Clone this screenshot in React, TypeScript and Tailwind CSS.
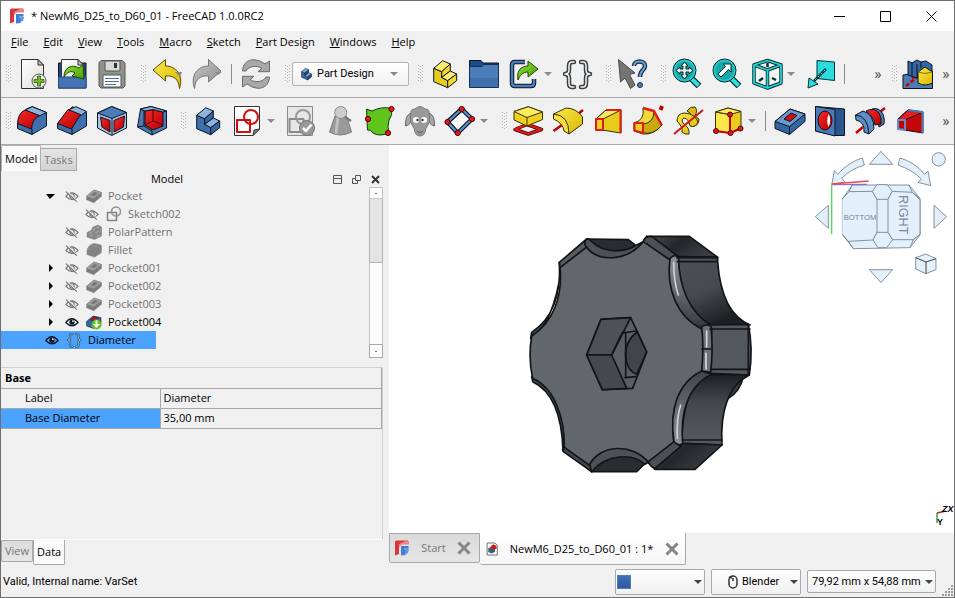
import type { ReactNode } from 'react';


const OUT = '#0b1521';

type IconProps = {
  className?: string,
  children: ReactNode
}

function Icon({ className = 'w-8 h-8', children }: IconProps) {
  return <svg viewBox="0 0 32 32" className={`shrink-0 ${className}`} fill="none" strokeLinejoin="round" aria-hidden="true">
    {children}
  </svg>
}

function Gradients() {

  const stops = [
    ['yellow', '#fce94f', '#d8b800'],
    ['red', '#f52a2a', '#b80000'],
    ['green', '#8ae234', '#4e9a06'],
    ['gray', '#c8c8c8', '#888a85'],
    ['paper', '#ffffff', '#dcdcd8'],
  ];

  return <svg className="absolute w-0 h-0" aria-hidden="true">
    <defs>
      {stops.map(([id, from, to]) =>
        <linearGradient key={id} id={id} x1="0" y1="0" x2="1" y2="1">
          <stop offset="0" stopColor={from} />
          <stop offset="1" stopColor={to} />
        </linearGradient>
      )}
      <linearGradient id="knobTop" x1="0" y1="0" x2="1" y2="0.4">
        <stop offset="0" stopColor="#4a4f53" />
        <stop offset="0.5" stopColor="#24272a" />
        <stop offset="1" stopColor="#3a3e42" />
      </linearGradient>
      <linearGradient id="knobScoop" x1="0" y1="0" x2="0.5" y2="1">
        <stop offset="0" stopColor="#4d5256" />
        <stop offset="0.55" stopColor="#454a4f" />
        <stop offset="1" stopColor="#1d2023" />
      </linearGradient>
      <linearGradient id="knobLow" x1="0" y1="0" x2="0" y2="1">
        <stop offset="0" stopColor="#1d2023" />
        <stop offset="0.4" stopColor="#43484c" />
        <stop offset="1" stopColor="#565b60" />
      </linearGradient>
      <linearGradient id="knobEdge" x1="0" y1="0" x2="0" y2="1">
        <stop offset="0" stopColor="#8d9296" />
        <stop offset="0.4" stopColor="#6d7276" />
        <stop offset="1" stopColor="#33373a" />
      </linearGradient>
      <linearGradient id="knobEdgeLow" x1="0" y1="1" x2="0" y2="0">
        <stop offset="0" stopColor="#8d9296" />
        <stop offset="0.4" stopColor="#6d7276" />
        <stop offset="1" stopColor="#3f4448" />
      </linearGradient>
    </defs>
  </svg>
}


/* file and edit icons */

function NewIcon() {
  return <Icon>
    <path d="M5.5 1.5H22L27.5 7V30.5H5.5Z" fill="url(#paper)" stroke="#2e3436" />
    <path d="M22 1.5V7H27.5Z" fill="#babdb6" stroke="#2e3436" />
    <circle cx="23" cy="23" r="7" fill="#eeeeec" stroke="#555753" />
    <path d="M21.5 18H24.5V21.5H28V24.5H24.5V28H21.5V24.5H18V21.5H21.5Z" fill="#73b52e" stroke="#2f5e05" strokeWidth="0.8" />
  </Icon>
}

function OpenIcon() {
  return <Icon>
    <path d="M2.5 5H30V30H2.5Z" fill="#204a87" stroke={OUT} />
    <path d="M5.5 1.5H22L27.5 7V22H5.5Z" fill="url(#paper)" stroke="#2e3436" />
    <path d="M22 1.5V7H27.5Z" fill="#babdb6" stroke="#2e3436" />
    <path d="M2.5 19H30V30H2.5Z" fill="#4474b2" stroke="#204a87" />
    <path d="M8 19C8 9 16 6 23 10L27 7L28 21L16 18L19 15C15 12 11 14 8 19Z" fill="url(#green)" stroke="#1f4a02" />
  </Icon>
}

function SaveIcon() {
  return <Icon>
    <path d="M5 2.5H26L29 5V28L27 30H5L3 28V4.5Z" fill="#8f918d" stroke="#555753" />
    <rect x="9" y="3" width="15" height="10" rx="1" fill="#d8d8d6" stroke="#555753" />
    <rect x="18" y="5" width="3" height="5" fill="#2e3436" />
    <rect x="7" y="17" width="18" height="12" rx="1" fill="#fff" stroke="#555753" />
    <path d="M9 20.5H23M9 23.5H23M9 26.5H20" stroke="#4a6fa5" strokeWidth="1.2" />
  </Icon>
}

function UndoIcon() {
  return <Icon>
    <path d="M2 12L14.5 1.5V8C24 8 33 16 28.5 30.5C28 21 22 17 14.5 18V23Z" fill="url(#yellow)" stroke="#5c4b00" />
    <path d="M24 14H31L29 19Z" fill="#888a85" />
  </Icon>
}

function RedoIcon() {
  return <Icon>
    <path d="M30 13L17.5 1.5V8C7 8 -1 17 3.5 30.5C4 21 10 17 17.5 18V24Z" fill="url(#gray)" stroke="#777" />
    <path d="M24 14H31L27 17Z" fill="#888a85" />
  </Icon>
}

function RefreshIcon() {
  const d = 'M2.5 13C3 5 8 1.7 14 1.7Q20 2 25 6L29.5 3V13.7H18L21.7 10.3C16 7 9 8 6 13Z';
  return <Icon>
    <path d={d} fill="#a8a8a8" stroke="#6c6c6c" />
    <path d={d} fill="#a8a8a8" stroke="#6c6c6c" transform="rotate(180 16 16)" />
  </Icon>
}

/* The L shaped solid is used by Part, Body and the workbench list */
function StepIcon({ face, side, top, className }: { face: string, side: string, top: string, className?: string }) {
  return <Icon className={className}>
    <g stroke={OUT}>
      <path d="M5.7 10.3L13.7 13.7V19.3L19.7 22.7V29.7L5.7 23.7Z" fill={face} />
      <path d="M5.7 10.3L14.7 2.7L22.3 6L13.7 13.7Z" fill={top} />
      <path d="M13.7 13.7L22.3 6V13L13.7 19.3Z" fill={side} />
      <path d="M13.7 19.3L22.3 13L28.7 16L19.7 22.7Z" fill={top} />
      <path d="M19.7 22.7L28.7 16V22.7L19.7 29.7Z" fill={side} />
    </g>
  </Icon>
}

function FolderIcon() {
  return <Icon>
    <path d="M1.5 2.5H13L15 5H30.5V12H1.5Z" fill="#204a87" stroke={OUT} />
    <path d="M1.5 8.5H14L16 6.5H30.5V29.5H1.5Z" fill="#4c7cb8" stroke="#15304f" />
    <path d="M2 20H30V29H2Z" fill="#3f6fae" />
  </Icon>
}

function LinkIcon() {
  return <Icon>
    <path d="M17 4H7Q4 4 4 7V25Q4 28 7 28H23Q26 28 26 25V21" stroke={OUT} strokeWidth="4.5" />
    <path d="M17 4H7Q4 4 4 7V25Q4 28 7 28H23Q26 28 26 25V21" stroke="#4c7cb8" strokeWidth="2.5" />
    <path d="M10 22C8 12 14 8 20 8V3L30 11L20 19V14C15 14 12 17 10 22Z" fill="url(#green)" stroke="#1f4a02" />
  </Icon>
}

function BracesIcon({ className, color = '#3a4043', light = '#f5f5f5' }: { className?: string, color?: string, light?: string }) {
  const d = 'M13 4H11Q8 4 8 8V12Q8 16 4 16Q8 16 8 20V25Q8 29 11 29H13M20 4H22Q25 4 25 8V12Q25 16 29 16Q25 16 25 20V25Q25 29 22 29H20';
  return <Icon className={className}>
    <path d={d} stroke={color} strokeWidth="4.5" strokeLinecap="round" />
    <path d={d} stroke={light} strokeWidth="1.5" strokeLinecap="round" />
  </Icon>
}

function WhatsThisIcon() {
  const d = 'M18 8C18 2 29 2 29 8C29 12 24 12 24 19';
  return <Icon>
    <path d="M2.5 1.5L19 15L13.5 16.5L19 27L14.5 30.5L9 20L4.5 24Z" fill="#747474" stroke="#4a4a4a" />
    <path d={d} stroke="#15304f" strokeWidth="4.5" />
    <path d={d} stroke="#729fcf" strokeWidth="2" />
    <circle cx="24" cy="27" r="2.5" fill="#4c7cb8" stroke="#15304f" />
  </Icon>
}

/* view icons */

function LensIcon({ children }: { children: ReactNode }) {
  return <Icon>
    <path d="M20 20L28 28" stroke="#032a2b" strokeWidth="6.5" />
    <path d="M20.5 20.5L27.5 27.5" stroke="#34e0e2" strokeWidth="4" />
    <circle cx="13.5" cy="12.5" r="11.5" fill="#16a9ab" stroke="#042a2a" />
    <circle cx="13.5" cy="12.5" r="10" stroke="#2cc8ca" strokeWidth="1.5" />
    {children}
  </Icon>
}

function FitAllIcon() {
  return <LensIcon>
    <path d="M13.5 4L17 8H15V11H18V9L22 12.5L18 16V14H15V17H17L13.5 21L10 17H12V14H9V16L5 12.5L9 9V11H12V8H10Z" fill="#eee" stroke="#042a2a" />
  </LensIcon>
}

function FitSelectionIcon() {
  return <LensIcon>
    <path d="M20 6V14L17.5 11.5L10 19L7 16L14.5 8.5L12 6Z" fill="#fff" stroke="#042a2a" />
  </LensIcon>
}

function IsoIcon() {
  const d = 'M3 7L16.5 2.5L30 7V25L16.5 30L3 25ZM3 7L16.5 12L30 7M16.5 12V30';
  return <Icon>
    <path d={d} fill="#f4f4f4" stroke="#033" strokeWidth="3.5" />
    <path d={d} stroke="#2bd0d2" strokeWidth="1.8" />
    <path d="M16.5 5V9M8 23L12 20M21 20L25 22" stroke="#033" strokeWidth="2.5" />
  </Icon>
}

function AlignViewIcon() {
  return <Icon>
    <path d="M13 2.5L30.5 4V22.5L13 20.5Z" fill="#2bdcde" stroke="#033" />
    <path d="M22 11L10 23" stroke="#033" strokeWidth="2.5" />
    <path d="M21 12L10 23" stroke="#9ff" strokeWidth="0.8" strokeDasharray="2 2" />
    <path d="M4 30L5 20L14 26Z" fill="#2bdcde" stroke="#033" />
  </Icon>
}

function StructureIcon() {
  return <Icon>
    <path d="M1 17L30.5 13V30.5H1Z" fill="#4c7cb8" stroke={OUT} />
    <path d="M4 28L14 20M10 20L27 13" stroke="#cc0000" strokeWidth="2.5" strokeDasharray="4 2" />
    <path d="M6 3L10 5L15 2L19 4L24 3L30 7V14L15 20L6 17Z" fill="#3465a4" stroke={OUT} />
    <path d="M10 5V18M15 6V20M19 4V10" stroke={OUT} />
    <path d="M16 14L23 9L30.5 14V25Q23 29 16 25Z" fill="url(#yellow)" stroke={OUT} />
    <path d="M16 14Q23 17 30 14" stroke="#8a7500" />
  </Icon>
}

/* dress-up icons */

function FilletIcon() {
  return <Icon>
    <path d="M1.5 19Q5 4 16.3 1.7L30.5 7.5V21L16 29.5L1.5 23.5Z" fill="#3f70ad" stroke={OUT} />
    <path d="M16.3 1.7L30.5 7.5L23 11L9 5Z" fill="#8fb4dc" stroke={OUT} />
    <path d="M1.5 18.5Q2 8 9 5L23.5 10.5Q16 14 15.5 24Z" fill="url(#red)" stroke={OUT} />
    <path d="M16 29.5V24" stroke={OUT} />
  </Icon>
}

function ChamferIcon() {
  return <Icon>
    <path d="M1.5 19L16.3 1.7L30.5 7.5V21L16 29.5L1.5 23.5Z" fill="#3f70ad" stroke={OUT} />
    <path d="M12 5L20 1.7L30.5 6.5L24 11Z" fill="#8fb4dc" stroke={OUT} />
    <path d="M1.5 18.5L12 4.5L24.5 9.5L15.5 24Z" fill="url(#red)" stroke={OUT} />
    <path d="M16 29.5V24" stroke={OUT} />
  </Icon>
}

function DraftIcon() {
  return <Icon>
    <path d="M1.5 8L15.7 1.5L30.5 7.5V23L15.7 30.5L1.5 23Z" fill="#a9c4e2" stroke={OUT} />
    <path d="M1.5 8L15.7 1.5L30.5 7.5L16 13.5Z" fill="#4c7cb8" stroke={OUT} />
    <path d="M4.5 12L14 15.5V27L6 22Z" fill="url(#red)" stroke={OUT} />
    <path d="M18 15.5L28.5 11L27.5 22L18 27Z" fill="url(#red)" stroke={OUT} />
    <path d="M16 13.5V30" stroke={OUT} />
  </Icon>
}

function ThicknessIcon() {
  return <Icon>
    <path d="M4.5 4L15 1.5L30.5 6V23L16 30L1.5 22Z" fill="#4c7cb8" stroke={OUT} />
    <path d="M4.5 4L8 5.5V21L1.5 22M8 21L16 26V30" stroke={OUT} />
    <path d="M9 6L17 4.5L27 7V21L17 25L9 20Z" fill="url(#red)" stroke={OUT} />
    <path d="M9 20L17 16L27 20M17 16V4.5" stroke="#5c0000" />
    <path d="M4.5 4L15 1.5L30.5 6L27 7L17 4.5L9 6Z" fill="#8fb4dc" stroke={OUT} />
  </Icon>
}

function SketchIcon() {
  return <Icon>
    <path d="M3.5 1.5H28.5V24L22 30.5H3.5Z" fill="#fff" stroke="#333" />
    <path d="M28.5 24L22 30.5L23 25Z" fill="#888a85" stroke="#333" />
    <rect x="6" y="15" width="13" height="12" stroke="#d01010" strokeWidth="2" />
    <circle cx="20" cy="12" r="7" stroke="#d01010" strokeWidth="2" />
  </Icon>
}

function ValidateIcon() {
  return <Icon>
    <path d="M3.5 1.5H28.5V30.5H3.5Z" fill="#e6e6e6" stroke="#8a8a8a" />
    <rect x="5.5" y="14" width="14" height="13" stroke="#8a8a8a" strokeWidth="2" />
    <circle cx="19" cy="12" r="7" stroke="#999" strokeWidth="2" />
    <circle cx="23" cy="23" r="7.5" fill="#999" stroke="#777" />
    <path d="M19 23L22 26L27.5 19.5" stroke="#fff" strokeWidth="2.5" />
  </Icon>
}

function CheckGeometryIcon() {
  return <Icon>
    <path d="M11 11H22.5L27.5 27Q16 33 5.5 27Z" fill="#9a9a9a" stroke="#7a7a7a" />
    <path d="M14 12L12 29" stroke="#c0c0c0" strokeWidth="3" />
    <path d="M21 12L27 16" stroke="#777" strokeWidth="2.5" />
    <circle cx="16.7" cy="7.5" r="6" fill="#ccc" stroke="#888" />
  </Icon>
}

function BinderIcon() {
  return <Icon>
    <path d="M2.5 4L8 6Q18 1 27.5 3.5Q29 10 25 15Q23 22 25 28Q15 32 9 28Q6 24 3.5 25Z" fill="#5fc41b" stroke="#173a02" />
    <g fill="#e01b1b" stroke="#500">
      <circle cx="27.5" cy="4" r="2.6" />
      <circle cx="4" cy="14" r="2.6" />
      <circle cx="24" cy="28" r="2.6" />
    </g>
  </Icon>
}

function CloneIcon() {
  return <Icon>
    <path d="M7 8Q1 10 1.5 21Q5 21 8 15M25 8Q31 10 30.5 21Q27 21 24 15" fill="#a5a5a5" stroke="#666" />
    <path d="M7 9Q6 4 11 4Q16 -1 21 4Q26 4 25 9Q27 17 22 23Q21 31 16 31Q11 31 10 23Q5 17 7 9Z" fill="#9a9a9a" stroke="#777" />
    <circle cx="12" cy="15" r="3" fill="#fff" />
    <circle cx="20" cy="15" r="3" fill="#fff" />
    <circle cx="13.5" cy="15" r="1.2" fill="#333" />
    <circle cx="18.5" cy="15" r="1.2" fill="#333" />
    <path d="M13 26L16 28L19 26" stroke="#555" />
  </Icon>
}

function DatumIcon() {
  const d = 'M17.7 4L28 14L13.7 28L3.5 17Z';
  return <Icon>
    <path d={d} fill="#fafafa" stroke={OUT} strokeWidth="4.5" />
    <path d={d} stroke="#5c8ec9" strokeWidth="2.2" />
    <g fill="#e01b1b" stroke="#500">
      <circle cx="17.7" cy="4" r="2.6" />
      <circle cx="28" cy="14" r="2.6" />
      <circle cx="13.7" cy="28" r="2.6" />
      <circle cx="3.5" cy="17" r="2.6" />
    </g>
  </Icon>
}

/* additive and subtractive icons */

function PadIcon() {
  return <Icon>
    <path d="M3 24.5L15 19.5L29.5 24.5L16.3 29Z" stroke="#400" strokeWidth="3.5" />
    <path d="M3 24.5L15 19.5L29.5 24.5L16.3 29Z" stroke="#e01b1b" strokeWidth="2" />
    <path d="M2 6.5L16.3 1.7L30.5 7V14.5L15 21L2 15Z" fill="#f0d020" stroke="#3b3000" />
    <path d="M2 6.5L16.3 1.7L30.5 7L15 12.5Z" fill="#fcec60" stroke="#3b3000" />
    <path d="M15 12.5V21" stroke="#3b3000" />
  </Icon>
}

function RevolutionIcon() {
  return <Icon>
    <path d="M1.5 26L10 20M26 9L31 5" stroke="#b00" strokeWidth="2.5" />
    <path d="M1.5 9L14 3Q24 3 30.5 12V19L17 29Q16 15 1.5 9Z" fill="url(#yellow)" stroke="#3b3000" />
    <path d="M1.5 9Q17 10 17 29L12 26Q11 18 1.5 14Z" fill="#f7de3c" stroke="#3b3000" />
  </Icon>
}

function LoftIcon() {
  return <Icon>
    <path d="M4 14L14 5H29V28L10 25Z" fill="#e8cc1c" stroke="#3b3000" />
    <path d="M4 14L14 5H29L11 14Z" fill="#fcec60" stroke="#3b3000" />
    <path d="M14 5H28.5V28" stroke="#e01b1b" strokeWidth="2" />
    <path d="M4 14H11V25H4Z" fill="#f0d020" stroke="#e01b1b" strokeWidth="2" />
  </Icon>
}

function SweepIcon() {
  return <Icon>
    <path d="M11 3L22 6L30 20Q22 30 11 29L2 26V18Q13 15 11 3Z" fill="#f0d83a" stroke="#3b3000" />
    <path d="M11 19Q22 18 22 6L30 20Q22 30 11 28Z" fill="#c9aa0c" stroke="#3b3000" />
    <path d="M11 3L22 6L29.5 20" stroke="#e01b1b" strokeWidth="2.5" />
    <path d="M2.5 18H11V28L2.5 25.5Z" fill="#f0d020" stroke="#e01b1b" strokeWidth="2" />
    <path d="M28.5 5L30 1" stroke="#b00" strokeWidth="4" />
  </Icon>
}

function HelixIcon() {
  return <Icon>
    <path d="M15 6Q18 1 23 2Q26 5 23 11L27 14Q27 20 22 21L17 19L18 8Z" fill="#d8ba14" stroke="#3b3000" />
    <path d="M5 16Q5 8 13 8Q23 9 26 17Q24 23 18 21Q17 14 12 13Q9 14 11 18Q18 23 17 29Q13 30 10 27Q11 22 5 16Z" fill="url(#yellow)" stroke="#3b3000" />
    <path d="M2 29L31 5" stroke="#c81818" strokeWidth="2" />
  </Icon>
}

function PrimitiveIcon() {
  return <Icon>
    <path d="M3.5 7L16 3L29 6.5V24L18 28L3.5 26Z" fill="#e8cc1c" stroke="#3b3000" />
    <path d="M3.5 7L18 9.5V28L3.5 26Z" fill="#fae74a" stroke="#3b3000" />
    <path d="M3.5 7L16 3L29 6.5L18 9.5Z" fill="#fcec60" stroke="#3b3000" />
    <path d="M18 9.5V28M18 28L28.5 23.5M18 28L4 26" stroke="#c00" strokeWidth="2" />
    <g fill="#e01b1b" stroke="#500">
      <circle cx="18" cy="9.5" r="2.5" />
      <circle cx="18.5" cy="28" r="2.5" />
      <circle cx="4" cy="26" r="2.5" />
      <circle cx="28.5" cy="23.5" r="2.5" />
    </g>
  </Icon>
}

function PocketIcon({ className, body = '#3465a4', top = '#6c99cd', hole = '#d01010', line = OUT }: { className?: string, body?: string, top?: string, hole?: string, line?: string }) {
  return <Icon className={className}>
    <path d="M1 16.5L16 4L31 9V16.5L15.5 29.5L1 23.5Z" fill={body} stroke={line} />
    <path d="M1 16.5L16 4L31 9L15.5 21.5Z" fill={top} stroke={line} />
    <path d="M10 14L17 8L23 10.5L16 16.5Z" fill={hole} stroke={line} />
    <path d="M15.5 21.5V29.5" stroke={line} />
  </Icon>
}

function HoleIcon() {
  return <Icon>
    <path d="M1.5 1.5L30.5 4V30.5H21L1.5 26Z" fill="#2a5590" stroke={OUT} />
    <path d="M1.5 1.5L21 4.5V31L1.5 26Z" fill="#4c7cb8" stroke={OUT} />
    <ellipse cx="11" cy="15.5" rx="7" ry="9.5" fill="url(#red)" stroke={OUT} />
    <path d="M14.5 9Q18 15 14.5 22Q12 16 14.5 9Z" fill="#fff" />
  </Icon>
}

function GrooveIcon() {
  return <Icon>
    <path d="M2 28L9 22M26 7L31 3" stroke="#c00" strokeWidth="2.5" />
    <path d="M18 4Q25 2 29 9Q31 14 30 19L25 22Q24 12 15 7Z" fill="#4c7cb8" stroke={OUT} />
    <path d="M12 6Q20 2 25 8Q28 13 27 19L21 20Q20 12 12 6Z" fill="url(#red)" stroke={OUT} />
    <path d="M1.5 10L9 6Q20 9 20 24L15 29L10 27Q11 17 2 15Z" fill="#5c8ec9" stroke={OUT} />
    <path d="M1.5 10Q14 11 15 29" stroke={OUT} />
  </Icon>
}

function SubLoftIcon() {
  return <Icon>
    <path d="M4 14L14 5L29 7V28L10 25Z" fill="#c40808" stroke={OUT} />
    <path d="M4 14L14 5L29 7L11 15Z" fill="#e02020" stroke={OUT} />
    <path d="M14 5L28.5 7V28" stroke="#4c7cb8" strokeWidth="2" />
    <path d="M4 15H11V25L4 24Z" fill="#cc0000" stroke="#5c8ec9" strokeWidth="2" />
  </Icon>
}

/* small icons */

function Logo({ className }: { className?: string }) {
  return <Icon className={className}>
    <path d="M2 4Q2 1 5 1H28V8H10V28L2 31Z" fill="#d9363c" />
    <path d="M10 8L24 1H28L30 3V9H16L10 14Z" fill="#f08286" />
    <path d="M14 12H29V17H21V19H28V24H24L23 30L14 31Z" fill="#3f7fd6" />
    <path d="M24 16L30 18L28 26L22 28Z" fill="#5b97e6" />
  </Icon>
}

function GraySketchIcon() {
  return <Icon className="w-4 h-4">
    <rect x="3" y="13" width="18" height="16" stroke="#808080" strokeWidth="3" />
    <circle cx="20" cy="11" r="9" stroke="#909090" strokeWidth="3" />
  </Icon>
}

function GrayPatternIcon() {
  return <Icon className="w-4 h-4">
    <path d="M2 17L10 13L14 6L24 2L31 6V24L17 31L2 26Z" fill="#8a8a8a" stroke="#777" />
    <path d="M7 19L12 16M14 12L18 9M21 8L26 5M8 25L13 22M19 18L26 14M21 26L27 22" stroke="#b4b4b4" strokeWidth="2" />
  </Icon>
}

function GrayFilletIcon() {
  return <Icon className="w-4 h-4">
    <path d="M2 19Q3 6 16 3L30 6Q32 14 30 22L17 30L2 25Z" fill="#838383" stroke="#777" />
    <path d="M3 18Q4 8 10 6L23 10" stroke="#989898" strokeWidth="2" />
  </Icon>
}

function TipIcon() {
  return <Icon className="w-4 h-4">
    <path d="M1 15L14 4L30 7V20L15 29L1 24Z" fill="#3465a4" stroke={OUT} />
    <path d="M9 12L16 6L25 8L18 14Z" fill="#d01010" stroke={OUT} />
    <circle cx="21" cy="21" r="10" fill="#63c01c" />
    <path d="M19 13H23V20H28L21 28L14 20H19Z" fill="#fff" />
  </Icon>
}

function EyeIcon() {
  return <Icon className="w-3.5 h-3.5">
    <path d="M2 17Q15 0 30 17Q16 32 2 17Z" stroke="#101820" strokeWidth="3" />
    <circle cx="16" cy="16" r="6" fill="#101820" />
    <circle cx="18" cy="14" r="2" fill="#fff" />
  </Icon>
}

function EyeOffIcon() {
  return <Icon className="w-3.5 h-3.5">
    <path d="M2 17Q15 0 30 17Q16 32 2 17Z" stroke="#707070" strokeWidth="2.5" />
    <circle cx="16" cy="16" r="5" stroke="#707070" strokeWidth="2.5" />
    <path d="M4 5L28 28" stroke="#efefef" strokeWidth="3" />
    <path d="M2 6L27 29" stroke="#707070" strokeWidth="2.5" />
  </Icon>
}

function Caret({ className = 'text-[#8a8a8a]' }: { className?: string }) {
  return <svg viewBox="0 0 8 4" className={`w-2 h-1 shrink-0 pointer-events-none ${className}`} fill="currentColor" aria-hidden="true">
    <path d="M0 0H8L4 4Z" />
  </svg>
}


/* toolbar parts */

function Handle({ className = 'w-[15px]' }: { className?: string }) {
  return <div className={`flex justify-end shrink-0 ${className}`}>
    <svg viewBox="0 0 6 18" className="w-1.5 h-[18px]" fill="#b8b8b8" aria-hidden="true">
      {[0, 3, 6, 9, 12, 15].map((y) => <path key={y} d={`M0 ${y}h1v1h-1zM2 ${y + 1}h1v1h-1zM4 ${y}h1v1h-1z`} />)}
    </svg>
  </div>
}

function Tool({ name, children }: { name: string, children: ReactNode }) {
  return <button type="button" aria-label={name} className="flex w-10 h-10 items-center justify-center shrink-0">
    {children}
  </button>
}

function MenuArrow({ name }: { name: string }) {
  return <button type="button" aria-label={name} className="flex w-[13px] h-8 items-center justify-start shrink-0">
    <Caret />
  </button>
}

function Separator() {
  return <div className="flex w-[9px] justify-center shrink-0">
    <div className="w-px h-5 bg-[#8c8c8c]"></div>
  </div>
}

function More() {
  return <button type="button" aria-label="More tools" className="w-4 shrink-0 text-sm text-[#444]">»</button>
}


type Row = {
  label: string,
  icon: ReactNode,
  visible?: boolean,
  child?: boolean,
  arrow?: 'open' | 'closed'
}

const grayPocket = <PocketIcon className="w-4 h-4" body="#7b7b7b" top="#9f9f9f" hole="#757575" line="#858585" />;

const rows: Row[] = [
  { label: 'Pocket', icon: grayPocket, arrow: 'open' },
  { label: 'Sketch002', icon: <GraySketchIcon />, child: true },
  { label: 'PolarPattern', icon: <GrayPatternIcon /> },
  { label: 'Fillet', icon: <GrayFilletIcon /> },
  { label: 'Pocket001', icon: grayPocket, arrow: 'closed' },
  { label: 'Pocket002', icon: grayPocket, arrow: 'closed' },
  { label: 'Pocket003', icon: grayPocket, arrow: 'closed' },
  { label: 'Pocket004', icon: <TipIcon />, arrow: 'closed', visible: true },
];

const menus = ['File', 'Edit', 'View', 'Tools', 'Macro', 'Sketch', 'Part Design', 'Windows', 'Help'];


function TreeRow({ row }: { row: Row }) {
  return <li className={`flex items-center h-[18px] ${row.child ? 'pl-16' : 'pl-11'}`}>
    <span className="flex w-5 shrink-0">
      {row.arrow &&
        <button type="button" aria-label={`Expand ${row.label}`}>
          <svg viewBox="0 0 10 10" className="w-2.5 h-2.5" aria-hidden="true">
            {row.arrow === 'open' ? <path d="M1 3H10L5 8Z" /> : <path d="M4 1V9L8 5Z" />}
          </svg>
        </button>
      }
    </span>
    <button type="button" aria-label={`Toggle ${row.label}`} className="mr-[7px]">
      {row.visible ? <EyeIcon /> : <EyeOffIcon />}
    </button>
    <span className="flex mr-1.5">{row.icon}</span>
    <span className={row.visible ? 'text-black' : 'text-[#707070]'}>{row.label}</span>
  </li>
}


function ModelPanel() {
  return <aside className="flex flex-col w-[382px] mr-1.5 shrink-0">

    <div role="tablist" className="flex items-end h-[26px] shrink-0">
      <button role="tab" aria-selected="true" className="h-[26px] px-[3px] bg-[#fafafa] border border-b-0 border-[#b0b0b0] rounded-t-xs">Model</button>
      <button role="tab" aria-selected="false" className="h-[23px] px-[3px] bg-linear-to-b from-[#e4e4e4] to-[#d2d2d2] border border-l-0 border-[#a8a8a8] text-[#777]">Tasks</button>
    </div>

    <header className="flex items-center h-4 shrink-0">
      <h2 className="flex-1 text-center">Model</h2>
      <div className="flex items-center gap-2.5 pr-[3px]">
        <button type="button" aria-label="Collapse">
          <svg viewBox="0 0 9 9" className="w-[9px] h-[9px]" fill="none" stroke="#555"><path d="M0.5 0.5H8.5V8.5H0.5ZM0.5 3.5H8.5" /></svg>
        </button>
        <button type="button" aria-label="Float">
          <svg viewBox="0 0 9 9" className="w-[9px] h-[9px]" fill="none" stroke="#555"><path d="M3.5 0.5H8.5V5.5H3.5ZM3.5 3.5H0.5V8.5H5.5V5.5" /></svg>
        </button>
        <button type="button" aria-label="Close panel">
          <svg viewBox="0 0 9 9" className="w-[9px] h-[9px]" stroke="#333" strokeWidth="2"><path d="M1 1L8 8M8 1L1 8" /></svg>
        </button>
      </div>
    </header>

    <div className="flex h-[171px] shrink-0">
      <ul className="flex-1">
        {rows.map((row) => <TreeRow key={row.label} row={row} />)}
        <li className="flex items-center h-[18px] w-[155px] pl-11 bg-[#4ba3ff]">
          <button type="button" aria-label="Toggle Diameter" className="mr-[7px]"><EyeIcon /></button>
          <BracesIcon className="w-4 h-4" color="#2a5672" light="#9fd6f0" />
          <span className="ml-1.5">Diameter</span>
        </li>
      </ul>
      <div className="flex flex-col w-3.5">
        <button type="button" aria-label="Scroll up" className="flex items-center justify-center h-3 bg-white border border-[#c4c4c4]">
          <i className="w-0.5 h-px bg-[#777]"></i>
        </button>
        <div className="h-16 bg-[#e4e4e4] border border-t-0 border-[#b4b4b4]"></div>
        <div className="flex-1 bg-[#fcfcfc] border-x border-[#c4c4c4]"></div>
        <button type="button" aria-label="Scroll down" className="flex items-center justify-center h-3.5 bg-white border border-[#a8a8a8]">
          <i className="w-0.5 h-px bg-[#777]"></i>
        </button>
      </div>
    </div>

    <section className="flex-1 mt-[9px] border border-l-0 border-[#d0d0d0] border-b-white">
      <table className="w-full border-collapse border-r border-[#a8a8a8] text-left">
        <thead>
          <tr className="h-5">
            <th colSpan={2} className="pl-1 border-b border-[#a8a8a8] font-bold">Base</th>
          </tr>
        </thead>
        <tbody>
          <tr className="h-5">
            <td className="w-[159px] pl-6 border-b border-r border-[#a8a8a8]">Label</td>
            <td className="pl-[3px] border-b border-[#a8a8a8]">Diameter</td>
          </tr>
          <tr className="h-5">
            <td className="pl-6 border-b border-r border-[#a8a8a8] bg-[#4ba3ff]">Base Diameter</td>
            <td className="pl-[3px] border-b border-[#a8a8a8]">35,00 mm</td>
          </tr>
        </tbody>
      </table>
    </section>

    <div role="tablist" className="flex items-start h-[26px] shrink-0">
      <button role="tab" aria-selected="false" className="h-[22px] px-[3px] bg-linear-to-b from-[#dcdcdc] to-[#e6e6e6] border border-[#a8a8a8] rounded-b-xs text-[#777]">View</button>
      <button role="tab" aria-selected="true" className="h-[25px] px-[3px] bg-[#fafafa] border border-t-0 border-[#a8a8a8] rounded-b-xs">Data</button>
    </div>

  </aside>
}


function Knob() {
  return <svg viewBox="0 0 720 765" className="absolute left-[131px] top-20 w-60 h-[255px]" role="img" aria-label="Star knob model"
    fill="none" stroke="#121416" strokeWidth="5" strokeLinejoin="round" strokeLinecap="round">

    {/* silhouette of the far side */}
    <path d="M670 455Q660 500 625 520L610 480Z" fill="#3c4145" />
    <path d="M200 42L325 44L345 60L330 75L250 80L205 60Z" fill="#2a2d30" />
    <path d="M215 740L350 740L375 715L330 680L240 690Z" fill="#2a2d30" />

    {/* side walls */}
    <path d="M380 34H508L593 97L475 95L400 50Z" fill="url(#knobTop)" />
    <path d="M475 95L593 97V110C600 210 630 275 690 300L570 300C510 260 478 200 475 110Z" fill="url(#knobScoop)" />
    <path d="M555 300L685 298Q700 370 688 450L570 445L575 310Z" fill="#53585d" />
    <path d="M560 448L688 450C625 480 600 560 606 660L485 655C488 560 500 490 560 448Z" fill="url(#knobLow)" />
    <path d="M485 655L606 660L525 733H405L385 712L455 660Z" fill="url(#knobTop)" />

    {/* left rim */}
    <path d="M118 112C124 210 98 280 35 322L32 340Q100 300 124 130Z" fill="#45494d" />
    <path d="M35 455L38 470C98 498 126 570 129 678L140 670Q140 520 60 460Z" fill="#45494d" />

    {/* front face */}
    <path d="M120 128L195 60Q280 125 370 50L380 34L455 95C440 190 470 270 545 305Q560 375 545 440C470 480 450 560 462 655L385 712Q305 640 215 715L208 735L133 668C134 580 105 490 38 460Q24 400 35 333C102 290 128 210 120 128Z" fill="#62676b" />

    {/* rounded rim */}
    <path d="M118 112L200 42L208 60L120 128Z" fill="#575c60" />
    <path d="M370 50Q372 34 395 34L475 95L450 105Z" fill="#4b5054" />
    <path d="M195 48Q205 35 213 48C250 85 310 85 350 60L370 50C320 110 230 115 195 60Z" fill="#4d5256" />
    <path d="M450 100Q465 85 475 97C478 195 510 260 570 300L545 312C470 275 438 190 450 100Z" fill="url(#knobEdge)" />
    <path d="M545 305Q560 295 573 305Q580 375 572 442L545 438Q552 370 545 305Z" fill="#6d7276" />
    <path d="M545 438L575 448C500 485 480 570 488 655Q475 665 462 652C448 560 470 475 545 438Z" fill="url(#knobEdgeLow)" />
    <path d="M462 650Q475 662 485 662L405 730Q390 725 385 710Z" fill="#4b5054" />
    <path d="M207 722C240 655 340 655 385 712L375 718C340 685 260 685 215 740Q205 735 207 722Z" fill="#4d5256" />
    <path d="M130 665L210 722L215 740L130 680Z" fill="#45494d" />
    <path d="M560 318V365M558 385V432" stroke="#d8dadb" strokeWidth="5" />
    <path d="M461 112Q461 170 475 210M472 640Q469 580 482 540" stroke="#d0d3d5" strokeWidth="5" />
    <path d="M472 110H592M570 312L690 312M572 433L690 433M487 645H606M545 372H573" />
    <path d="M470 98H592M685 298V450" />

    {/* hexagonal pocket */}
    <path d="M243 283L332 278L380 381L338 490L247 494L200 390Z" fill="#5a5f63" />
    <path d="M243 283L332 278L275 390H200Z" fill="#4d5256" />
    <path d="M200 390H275L320 490L247 494Z" fill="#45494d" />
    <path d="M352 322C305 350 305 430 350 448L380 381Z" fill="#404549" />
    <path d="M305 324L350 318M315 458L348 455M317 322V458M275 390L303 330" />
  </svg>
}

function NavigationCube() {
  return <svg viewBox="0 0 450 435" className="absolute right-0 top-0 w-[150px] h-[145px]" role="img" aria-label="Navigation cube"
    fill="#e3effa" stroke="#6f7f8d" strokeWidth="2.5" strokeLinejoin="round">
    <path d="M231 19L266 58H196Z" />
    <path d="M231 413L266 374H196Z" />
    <path d="M34 215L73 181V250Z" />
    <path d="M428 215L390 181V250Z" />
    <circle cx="404" cy="43" r="20" />
    <path d="M175 39L181 60Q140 72 113 100L123 110L83 121L91 77L101 88Q135 50 175 39Z" />
    <path d="M288 39L282 60Q325 75 352 102L342 112L380 122L372 78L362 88Q330 50 288 39Z" />
    <path d="M366 327L396 341V374L366 386L335 372V338Z" />
    <path d="M335 338L366 351L396 341M366 351V386" stroke="#222" />

    <path d="M145 120H315L348 160V270L318 308L148 311L115 268V162Z" />
    <path d="M115 162L135 140L205 139L219 163V262L207 285L133 289L115 268" />
    <path d="M145 120L135 140M148 311L133 289M315 120L325 142L348 160M318 308L328 284L348 268" fill="none" />
    <path d="M205 139L219 119H250L265 139L252 163H219Z" />
    <path d="M207 285L219 262H252L266 284L248 308H222Z" />
    <path d="M252 163L265 139L325 142L348 165V268L328 284H266L252 262Z" />
    <path d="M83 122V268" stroke="#4be04b" strokeWidth="4" />
    <path d="M90 119L188 118" stroke="#8a6ad8" strokeWidth="4" />
    <path d="M83 117L194 108" stroke="#f04848" strokeWidth="4" />
    <text x="119" y="225" fontSize="23" fill="#76889a" stroke="none" fontFamily="Liberation Sans, sans-serif">BOTTOM</text>
    <text x="150" y="-286" fontSize="38" fill="#76889a" stroke="none" fontFamily="Liberation Sans, sans-serif" transform="rotate(90)">RIGHT</text>
  </svg>
}

function AxisCross() {
  return <svg viewBox="0 0 20 24" className="absolute right-0 bottom-1.5 w-5 h-6" aria-hidden="true">
    <path d="M3 10V20" stroke="#3aa34a" strokeWidth="1.5" />
    <path d="M3 10L12 8" stroke="#a0303a" strokeWidth="1.5" />
    <text x="8" y="9" fontSize="9" fontWeight="bold" fontStyle="italic" fontFamily="Liberation Sans, sans-serif">ZX</text>
    <text x="3" y="22" fontSize="9" fontWeight="bold" fontFamily="Liberation Sans, sans-serif">Y</text>
  </svg>
}

function CloseX() {
  return <svg viewBox="0 0 14 14" className="w-3.5 h-3.5" stroke="#858585" strokeWidth="3" aria-hidden="true">
    <path d="M1.5 1.5L12.5 12.5M12.5 1.5L1.5 12.5" />
  </svg>
}


function App() {

  return <div className="relative flex flex-col min-h-screen bg-[#f0f0f0] border border-[#6e6e6e] text-black text-[11px] leading-4 font-['Open_Sans','Noto_Sans',sans-serif]">

    <Gradients />

    {/* title bar */}
    <header className="flex items-center h-[30px] pl-2 bg-white shrink-0">
      <Logo className="w-4 h-4" />
      <h1 className="ml-1.5 flex-1">* NewM6_D25_to_D60_01 - FreeCAD 1.0.0RC2</h1>
      <button type="button" aria-label="Minimize" className="flex w-[46px] justify-center">
        <svg viewBox="0 0 11 11" className="w-[11px] h-[11px]" stroke="#000"><path d="M0 5.5H11" /></svg>
      </button>
      <button type="button" aria-label="Maximize" className="flex w-[46px] justify-center">
        <svg viewBox="0 0 11 11" className="w-[11px] h-[11px]" stroke="#000" fill="none"><path d="M0.5 0.5H10.5V10.5H0.5Z" /></svg>
      </button>
      <button type="button" aria-label="Close" className="flex w-[46px] justify-center">
        <svg viewBox="0 0 11 11" className="w-[11px] h-[11px]" stroke="#000"><path d="M0.5 0.5L10.5 10.5M10.5 0.5L0.5 10.5" /></svg>
      </button>
    </header>

    <nav className="flex items-center gap-px h-[22px] pl-[3px] shrink-0">
      {menus.map((menu) =>
        <button key={menu} type="button" className="px-[7px]"><u>{menu[0]}</u>{menu.slice(1)}</button>
      )}
    </nav>

    {/* file, workbench and view tools */}
    <div role="toolbar" aria-label="Standard tools" className="flex items-center h-[45px] pb-0.5 border-b border-[#a9a9a9] shrink-0">
      <Handle className="w-[11px]" />
      <Tool name="New"><NewIcon /></Tool>
      <Tool name="Open"><OpenIcon /></Tool>
      <Tool name="Save"><SaveIcon /></Tool>
      <Handle />
      <Tool name="Undo"><UndoIcon /></Tool>
      <Tool name="Redo"><RedoIcon /></Tool>
      <Separator />
      <Tool name="Refresh"><RefreshIcon /></Tool>
      <Handle />
      <div className="relative flex items-center w-[117px] h-6 ml-px bg-linear-to-b from-white to-[#f0f0f0] border border-[#b4b4b4] rounded-xs shrink-0">
        <span className="absolute left-1.5 pointer-events-none">
          <StepIcon className="w-3.5 h-3.5" face="#3465a4" top="#729fcf" side="#204a87" />
        </span>
        <select aria-label="Workbench" className="w-full h-full pl-6 appearance-none font-[Roboto,sans-serif]">
          <option>Part Design</option>
        </select>
        <span className="absolute right-2.5 pointer-events-none"><Caret /></span>
      </div>
      <Handle />
      <Tool name="Create part"><StepIcon face="#e8cc1c" top="#fcee6c" side="#f3d92e" /></Tool>
      <Tool name="Create group"><FolderIcon /></Tool>
      <Tool name="Make link"><LinkIcon /></Tool>
      <MenuArrow name="Link actions" />
      <Tool name="Create variable set"><BracesIcon /></Tool>
      <Handle />
      <Tool name="What's this?"><WhatsThisIcon /></Tool>
      <Handle />
      <Tool name="Fit all"><FitAllIcon /></Tool>
      <Tool name="Fit selection"><FitSelectionIcon /></Tool>
      <Tool name="Isometric"><IsoIcon /></Tool>
      <MenuArrow name="Standard views" />
      <Tool name="Align to selection"><AlignViewIcon /></Tool>
      <Separator />
      <div className="flex-1"></div>
      <More />
      <Handle className="w-3" />
      <Tool name="Structure"><StructureIcon /></Tool>
      <More />
    </div>

    {/* part design tools */}
    <div role="toolbar" aria-label="Part Design tools" className="flex items-center h-[47px] border-b border-[#a9a9a9] shrink-0">
      <Handle className="w-[11px]" />
      <Tool name="Fillet"><FilletIcon /></Tool>
      <Tool name="Chamfer"><ChamferIcon /></Tool>
      <Tool name="Draft"><DraftIcon /></Tool>
      <Tool name="Thickness"><ThicknessIcon /></Tool>
      <Handle />
      <Tool name="Create body"><StepIcon face="#3f70ad" top="#8fb4dc" side="#3465a4" /></Tool>
      <Tool name="Create sketch"><SketchIcon /></Tool>
      <MenuArrow name="Sketch actions" />
      <Tool name="Validate sketch"><ValidateIcon /></Tool>
      <Tool name="Check geometry"><CheckGeometryIcon /></Tool>
      <Tool name="Shape binder"><BinderIcon /></Tool>
      <Tool name="Clone"><CloneIcon /></Tool>
      <Tool name="Datum plane"><DatumIcon /></Tool>
      <MenuArrow name="Datums" />
      <Handle />
      <Tool name="Pad"><PadIcon /></Tool>
      <Tool name="Revolution"><RevolutionIcon /></Tool>
      <Tool name="Additive loft"><LoftIcon /></Tool>
      <Tool name="Additive pipe"><SweepIcon /></Tool>
      <Tool name="Additive helix"><HelixIcon /></Tool>
      <Tool name="Additive primitive"><PrimitiveIcon /></Tool>
      <MenuArrow name="Additive primitives" />
      <Separator />
      <Tool name="Pocket"><PocketIcon /></Tool>
      <Tool name="Hole"><HoleIcon /></Tool>
      <Tool name="Groove"><GrooveIcon /></Tool>
      <Tool name="Subtractive loft"><SubLoftIcon /></Tool>
      <div className="flex-1"></div>
      <More />
    </div>

    <main className="flex flex-1">
      <ModelPanel />

      <section className="flex flex-col flex-1">
        <div className="relative flex-1 bg-white overflow-hidden">
          <Knob />
          <NavigationCube />
          <AxisCross />
        </div>

        <div role="tablist" className="flex items-start h-[33px] shrink-0">
          <div className="flex items-center h-[30px] w-[91px] pl-1 pr-2 bg-linear-to-b from-[#dadada] to-[#e6e6e6] border border-[#a8a8a8] rounded-b-xs text-[#777]">
            <Logo className="w-4 h-4" />
            <button role="tab" aria-selected="false" className="flex-1">Start</button>
            <button type="button" aria-label="Close Start"><CloseX /></button>
          </div>
          <div className="flex items-center h-8 w-[206px] px-1.5 bg-linear-to-b from-white to-[#f6f6f6] border border-t-0 border-l-0 border-[#a8a8a8] rounded-b-xs">
            <Icon className="w-3 h-4">
              <path d="M3 0H24L30 6V32H3Z" fill="#fff" stroke="#444" strokeWidth="2" />
              <path d="M6 14L16 9L24 13V24L14 28L6 24Z" fill="#3a6080" />
              <path d="M13 8L20 3L28 8V15L20 18L13 14Z" fill="#d01818" />
            </Icon>
            <button role="tab" aria-selected="true" className="flex-1">NewM6_D25_to_D60_01 : 1*</button>
            <button type="button" aria-label="Close NewM6_D25_to_D60_01"><CloseX /></button>
          </div>
        </div>
      </section>
    </main>

    {/* status bar */}
    <footer className="relative flex items-center gap-1.5 h-[31px] pr-[18px] shrink-0 font-[Roboto,sans-serif]">
      <p className="flex-1 pl-0.5">Valid, Internal name: VarSet</p>
      <button type="button" aria-label="Notifications" className="flex items-center justify-between w-[90px] h-[26px] pl-px pr-0.5 bg-linear-to-b from-white to-[#f0f0f0] border border-[#a8a8a8] rounded-xs">
        <span className="w-3.5 h-3.5 bg-linear-to-b from-[#3f72b4] to-[#2a5a9c] border border-[#4f7fba]"></span>
        <Caret className="text-[#444]" />
      </button>
      <div className="relative flex items-center w-[90px] h-[26px] bg-linear-to-b from-white to-[#f0f0f0] border border-[#a8a8a8] rounded-xs">
        <svg viewBox="0 0 10 14" className="absolute left-4 w-2.5 h-3.5 pointer-events-none" fill="none" stroke="#333" strokeWidth="1.5" aria-hidden="true">
          <rect x="1" y="1" width="8" height="12" rx="4" />
          <path d="M5 3V6M1 2L4 3" />
        </svg>
        <select aria-label="Navigation style" className="w-full h-full pl-[30px] appearance-none"><option>Blender</option></select>
        <span className="absolute right-0.5 flex"><Caret className="text-[#444]" /></span>
      </div>
      <div className="relative flex items-center w-[129px] h-[23px] bg-linear-to-b from-white to-[#f0f0f0] border border-[#a8a8a8] rounded-xs">
        <select aria-label="View size" className="w-full h-full pl-1 appearance-none"><option>79,92 mm x 54,88 mm</option></select>
        <span className="absolute right-0.5 flex"><Caret className="text-[#444]" /></span>
      </div>
      <svg viewBox="0 0 12 12" className="absolute right-0 bottom-0 w-3 h-3" fill="#999" aria-hidden="true">
        <path d="M9 0h2v2h-2zM6 3h2v2h-2zM9 3h2v2h-2zM3 6h2v2h-2zM6 6h2v2h-2zM9 6h2v2h-2zM0 9h2v2h-2zM3 9h2v2h-2zM6 9h2v2h-2zM9 9h2v2h-2z" />
      </svg>
    </footer>

  </div>

}


export default App;
